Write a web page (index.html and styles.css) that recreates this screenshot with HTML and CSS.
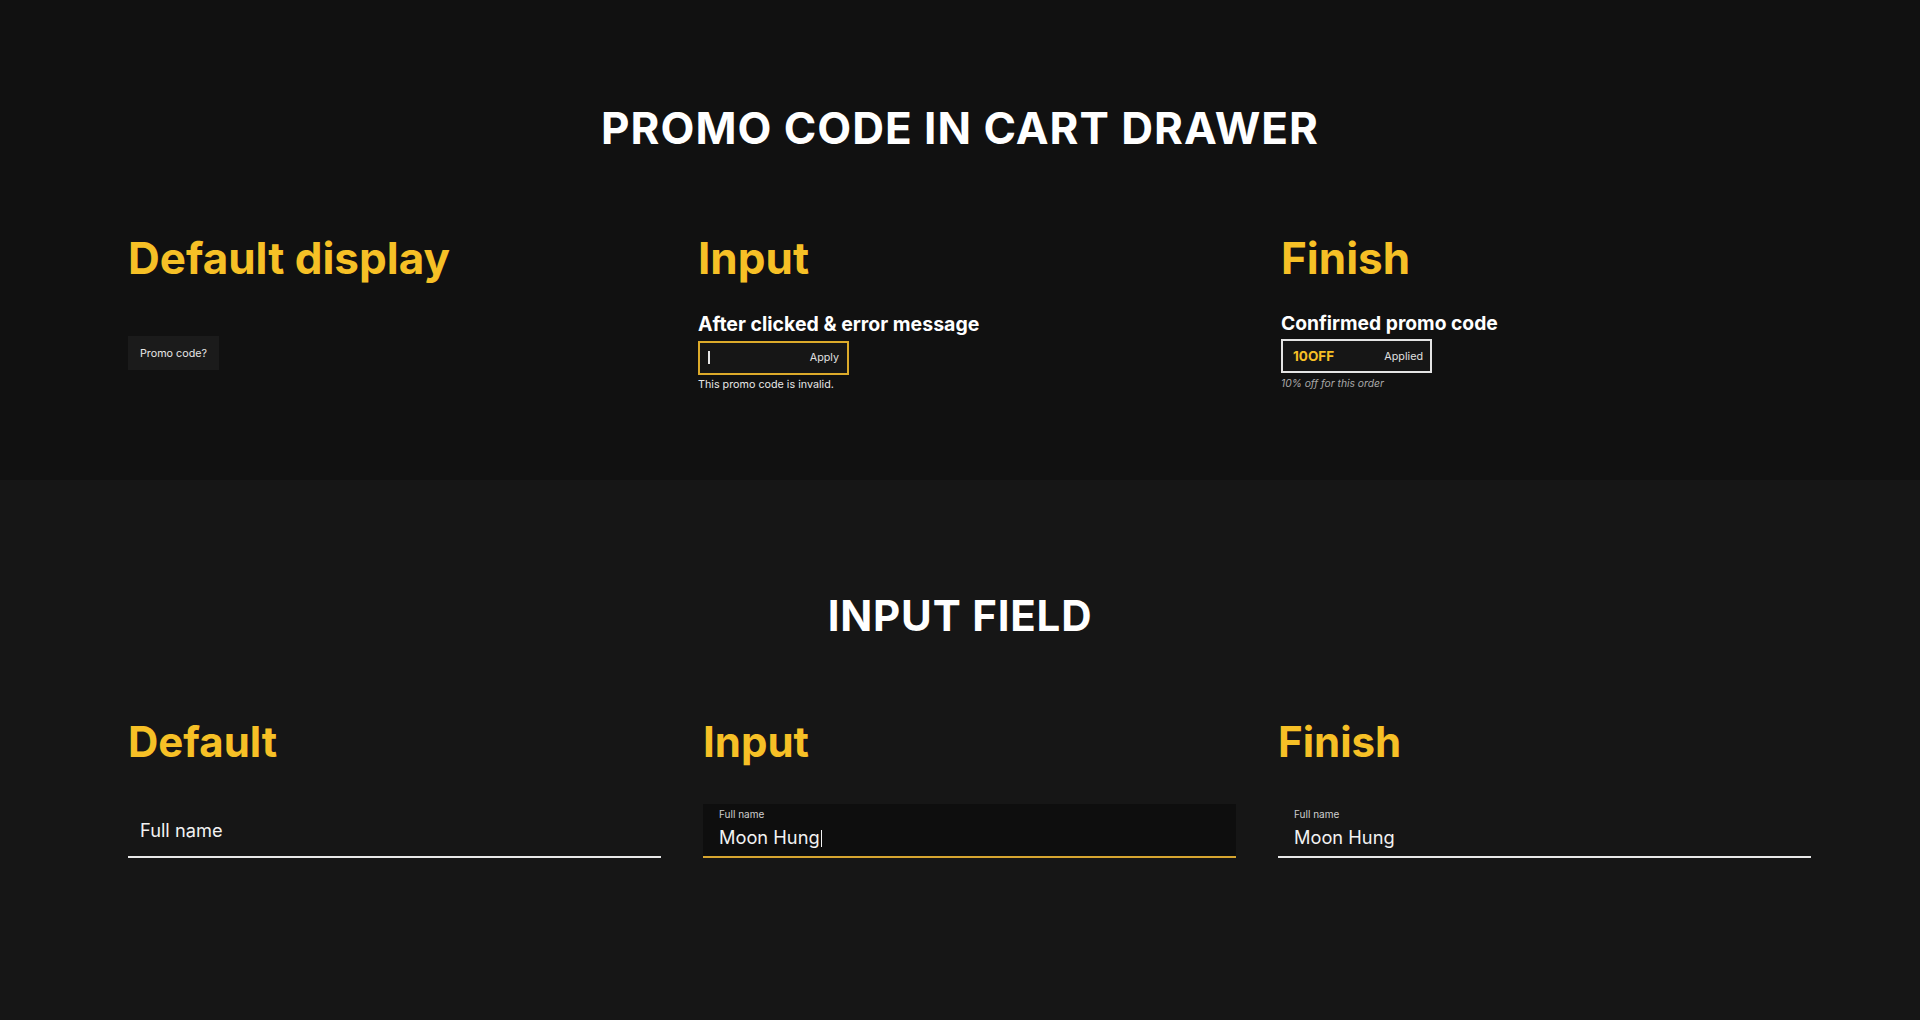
FILE: index.html
```html
<!DOCTYPE html>
<html lang="en">
<head>
  <meta charset="UTF-8">
  <title>Promo code &amp; input field states</title>
  <link rel="stylesheet" href="styles.css">
</head>
<body>
  <section class="board board-promo">
    <h1 class="board-title">PROMO CODE IN CART DRAWER</h1>
    <div class="states states-promo">
      <div class="state">
        <h2 class="state-title">Default display</h2>
        <button class="promo-toggle">Promo code?</button>
      </div>
      <div class="state">
        <h2 class="state-title">Input</h2>
        <h3 class="state-sub">After clicked &amp; error message</h3>
        <div class="promo-box promo-box-active">
          <span class="caret"></span>
          <span class="promo-action">Apply</span>
        </div>
        <p class="promo-note">This promo code is invalid.</p>
      </div>
      <div class="state state-finish">
        <h2 class="state-title">Finish</h2>
        <h3 class="state-sub">Confirmed promo code</h3>
        <div class="promo-box promo-box-done">
          <span class="promo-code">10OFF</span>
          <span class="promo-action">Applied</span>
        </div>
        <p class="promo-note promo-note-info">10% off for this order</p>
      </div>
    </div>
  </section>

  <section class="board board-fields">
    <h1 class="board-title">INPUT FIELD</h1>
    <div class="states states-fields">
      <div class="state">
        <h2 class="state-title state-title-sm">Default</h2>
        <div class="field field-empty">
          <span class="field-placeholder">Full name</span>
        </div>
      </div>
      <div class="state">
        <h2 class="state-title state-title-sm">Input</h2>
        <div class="field field-focus">
          <span class="field-label">Full name</span>
          <span class="field-value">Moon Hung<span class="field-caret"></span></span>
        </div>
      </div>
      <div class="state">
        <h2 class="state-title state-title-sm">Finish</h2>
        <div class="field">
          <span class="field-label">Full name</span>
          <span class="field-value">Moon Hung</span>
        </div>
      </div>
    </div>
  </section>
</body>
</html>
```

FILE: styles.css
```css
* {
  box-sizing: border-box;
}
body {
  margin: 0;
  background: #161616;
  color: #f2f2f2;
  font-family: 'Inter', 'Noto Sans', Arial, sans-serif;
}
.board {
  margin: 0;
}
.board-promo {
  background: #111111;
  min-height: 480px;
  padding-top: 106px;
}
.board-fields {
  background: #161616;
  min-height: 540px;
  padding-top: 115px;
}
.board-title {
  margin: 0;
  text-align: center;
  font-size: 44px;
  line-height: 1;
  font-weight: 700;
  letter-spacing: 1px;
  color: #ffffff;
}
.board-fields .board-title {
  font-size: 42px;
  letter-spacing: 0.8px;
}
.states {
  display: grid;
  padding-left: 128px;
}
.states-promo {
  grid-template-columns: 570px 583px 1fr;
  margin-top: 86px;
}
.states-fields {
  grid-template-columns: repeat(3, 533px);
  column-gap: 42px;
  margin-top: 84px;
}
.state {
  display: flex;
  flex-direction: column;
  align-items: flex-start;
}
.state-title {
  margin: 0;
  font-size: 44px;
  line-height: 1;
  font-weight: 700;
  color: #f6c026;
}
.state-title-sm {
  font-size: 42px;
}
.state-sub {
  margin: 35px 0 0;
  font-size: 19.5px;
  line-height: 1;
  font-weight: 700;
  color: #ffffff;
}
.state-finish .state-sub {
  margin-top: 34px;
  font-size: 19.25px;
}

/* promo code */
.promo-toggle {
  margin-top: 56px;
  height: 34px;
  padding: 0 12px;
  border: none;
  background: #1b1b1b;
  color: #e6e6e6;
  font-family: inherit;
  font-size: 10.75px;
}
.promo-box {
  margin-top: 6px;
  width: 151px;
  height: 34px;
  display: flex;
  align-items: center;
  justify-content: space-between;
  padding: 0 8px;
  background: #161616;
  border: 2px solid #dcaa2a;
}
.promo-box-done {
  border-color: #e4e4e4;
  padding: 0 7px 0 10px;
}
.caret {
  width: 1.5px;
  height: 13px;
  background: #e6e6e6;
}
.promo-action {
  font-size: 10.75px;
  color: #e0e0e0;
}
.promo-code {
  font-size: 13.5px;
  font-weight: 700;
  color: #f6c026;
}
.promo-note {
  margin: 3px 0 0;
  font-size: 10.75px;
  line-height: 14px;
  color: #e6e6e6;
}
.promo-note-info {
  font-size: 10.3px;
  font-style: italic;
  color: #a8a8a8;
}

/* input field */
.field {
  width: 100%;
  height: 54px;
  display: flex;
  flex-direction: column;
  padding: 4px 16px 0;
  margin-top: 41px;
  border-bottom: 2px solid #e8e8e8;
}
.field-empty {
  justify-content: center;
  padding: 0 12px;
}
.field-focus {
  background: #0e0e0e;
  border-bottom-color: #d6a530;
}
.field-label {
  font-size: 10px;
  line-height: 12px;
  color: #cfcfcf;
}
.field-value,
.field-placeholder {
  font-size: 18.25px;
  line-height: 24px;
  color: #f2f2f2;
}
.field-value {
  margin-top: 5px;
}
.field-caret {
  display: inline-block;
  width: 1.5px;
  height: 17px;
  margin-left: 1px;
  vertical-align: -3px;
  background: #f2f2f2;
}
```
